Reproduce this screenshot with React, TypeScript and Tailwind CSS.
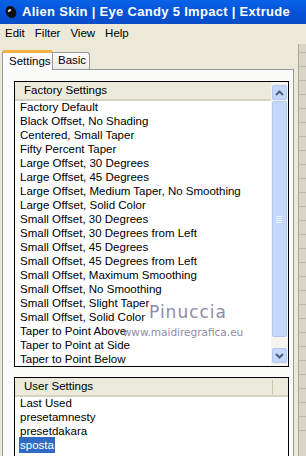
import React from 'react';

const factory = [
  'Factory Default',
  'Black Offset, No Shading',
  'Centered, Small Taper',
  'Fifty Percent Taper',
  'Large Offset, 30 Degrees',
  'Large Offset, 45 Degrees',
  'Large Offset, Medium Taper, No Smoothing',
  'Large Offset, Solid Color',
  'Small Offset, 30 Degrees',
  'Small Offset, 30 Degrees from Left',
  'Small Offset, 45 Degrees',
  'Small Offset, 45 Degrees from Left',
  'Small Offset, Maximum Smoothing',
  'Small Offset, No Smoothing',
  'Small Offset, Slight Taper',
  'Small Offset, Solid Color',
  'Taper to Point Above',
  'Taper to Point at Side',
  'Taper to Point Below',
];

const user = ['Last Used', 'presetamnesty', 'presetdakara', 'sposta'];

const Chevron = ({ up }: { up?: boolean }) => (
  <svg width="9" height="6" viewBox="0 0 9 6">
    <path
      d={up ? 'M1 5 L4.5 1.5 L8 5' : 'M1 1 L4.5 4.5 L8 1'}
      fill="none"
      stroke="#4d6185"
      strokeWidth="2"
    />
  </svg>
);

const ArrowBtn = ({ up }: { up?: boolean }) => (
  <div className="h-[15px] w-[15px] shrink-0 rounded-[2px] border border-[#b5c8f3] bg-[#c6d7fc] flex items-center justify-center">
    <Chevron up={up} />
  </div>
);

const App = () => {
  return (
    <div
      className="relative w-[306px] h-[456px] overflow-hidden bg-[#ece9d8] flex flex-col text-[11.5px] text-black"
      style={{ fontFamily: '"Liberation Sans", Arial, sans-serif' }}
    >
      {/* title bar */}
      <div className="h-[24px] shrink-0 bg-gradient-to-b from-[#0a62e6] via-[#0453d8] to-[#0a4dc8] flex items-center pl-[4px] gap-[4px]">
        <svg width="14" height="14" viewBox="0 0 14 14">
          <ellipse cx="7" cy="7" rx="5" ry="6.3" fill="#111" transform="rotate(-30 7 7)" />
          <ellipse cx="5.5" cy="5.5" rx="1.8" ry="1.2" fill="#ddd" transform="rotate(-30 5.5 5.5)" />
        </svg>
        <span className="text-white font-bold text-[13px] tracking-[0.3px]">
          Alien Skin | Eye Candy 5 Impact | Extrude
        </span>
      </div>

      {/* menu bar */}
      <div className="h-[20px] shrink-0 flex items-center pl-[5px] gap-[10px]">
        <span>Edit</span>
        <span>Filter</span>
        <span>View</span>
        <span>Help</span>
      </div>

      <div className="flex flex-1 min-h-0">
        <div className="w-[294px] flex flex-col">
          {/* tabs */}
          <div className="h-[22px] shrink-0 flex items-end pl-[2px] mt-[3px]">
            <div className="h-[20px] w-[51px] pl-[6px] bg-[#fcfcfe] border-x border-[#919b9c] border-t-[3px] border-t-[#f5b041] rounded-t-[3px] flex items-center relative z-10 -mb-px">
              Settings
            </div>
            <div className="h-[17px] w-[37px] pl-[5px] bg-gradient-to-b from-[#ffffff] to-[#ecebe6] border-r border-t border-[#919b9c] rounded-tr-[3px] flex items-center">
              Basic
            </div>
          </div>

          {/* panel */}
          <div className="flex-1 ml-[2px] border-l border-t border-r border-[#919b9c] bg-[#fbfbf9] pl-[11px] pr-[4px] pt-[11px] flex flex-col">
            {/* factory listbox */}
            <div className="h-[286px] shrink-0 border border-black bg-white flex overflow-hidden">
              <div className="flex-1 flex flex-col">
                <div className="h-[19px] shrink-0 bg-[#ebeadb] border-b-[2px] border-[#d6d2c2] flex items-center pl-[9px]">
                  Factory Settings
                </div>
                <div className="pl-[5px] -mt-px">
                  {factory.map((f) => (
                    <div key={f} className="h-[14px] leading-[14px] whitespace-nowrap">
                      {f}
                    </div>
                  ))}
                </div>
              </div>
              <div className="w-[17px] bg-[#f4f3ee] flex flex-col items-center py-[3px] pr-px">
                <ArrowBtn up />
                <div className="w-[15px] h-[236px] shrink-0 mt-px rounded-[2px] border border-[#b5c8f3] bg-[#c6d7fc] flex items-center justify-center">
                  <div className="flex flex-col gap-[1px]">
                    <div className="w-[6px] h-px bg-[#eef4fe]" />
                    <div className="w-[6px] h-px bg-[#eef4fe]" />
                    <div className="w-[6px] h-px bg-[#eef4fe]" />
                    <div className="w-[6px] h-px bg-[#eef4fe]" />
                  </div>
                </div>
                <div className="flex-1" />
                <ArrowBtn />
              </div>
            </div>

            {/* user listbox */}
            <div className="flex-1 mt-[10px] border border-black border-b-0 bg-white flex flex-col">
              <div className="h-[19px] shrink-0 bg-[#ebeadb] border-b-[2px] border-[#d6d2c2] flex items-center pl-[9px] relative">
                User Settings
                <div className="absolute right-[15px] top-[2px] w-px h-[14px] bg-[#c7c5b2]" />
              </div>
              <div className="pl-[5px] -mt-px">
                {user.map((u) => (
                  <div key={u} className="h-[14px] leading-[14px]">
                    <span
                      className={
                        u === 'sposta'
                          ? 'bg-[#316ac5] text-white px-[1px] -ml-px -mt-px inline-block h-[16px] leading-[16px] align-top'
                          : ''
                      }
                    >
                      {u}
                    </span>
                  </div>
                ))}
              </div>
            </div>
          </div>
        </div>

        {/* right edge strip */}
        <div className="flex-1 flex">
          <div className="w-[4px]" />
          <div className="flex-1 bg-[#d8d5c7] border-l border-[#aca899] flex flex-col gap-[13px] pt-[8px]">
            {Array.from({ length: 28 }).map((_, i) => (
              <div key={i} className="h-px bg-[#bdb9a9]" />
            ))}
          </div>
        </div>
      </div>

      {/* watermark */}
      <div className="absolute left-[132px] top-[302px] w-[112px] flex flex-col items-center text-[#8f8aa8] pointer-events-none">
        <span className="text-[17px] leading-[20px] tracking-[1px]" style={{ fontFamily: '"DejaVu Sans", sans-serif' }}>
          Pinuccia
        </span>
      </div>
      <div className="absolute left-[120px] top-[326px] w-[126px] flex flex-col items-center text-[#8f8aa8] pointer-events-none">
        <span className="text-[10.5px] leading-[12px]" style={{ fontFamily: '"DejaVu Sans", sans-serif' }}>
          www.maidiregrafica.eu
        </span>
      </div>
    </div>
  );
};

export default App;
